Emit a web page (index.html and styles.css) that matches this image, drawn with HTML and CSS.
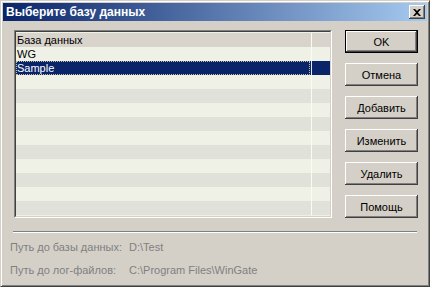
FILE: index.html
```html
<!DOCTYPE html>
<html lang="ru">
<head>
  <meta charset="UTF-8" />
  <title>Выберите базу данных</title>
  <link rel="stylesheet" href="styles.css">
</head>
<body>

<div class="window">
  <!-- Title bar -->
  <div class="titlebar">
    <span class="title">Выберите базу данных</span>
    <button class="close">
      <svg width="8" height="7" viewBox="0 0 8 7"><path d="M0 0h2l2 2 2-2h2L5 3.5 8 7H6L4 5 2 7H0l3-3.5z" fill="#000"/></svg>
    </button>
  </div>

  <div class="content">
    <div class="main">
      <div class="list">
        <div class="list-inner">
          <div class="row head"><span class="col">База данных</span><span class="col2"></span></div>
          <div class="row"><span class="col">WG</span><span class="col2"></span></div>
          <div class="row selected"><span class="col"><span class="focus">Sample</span></span><span class="col2"></span></div>
          <div class="row"><span class="col"></span><span class="col2"></span></div>
          <div class="row"><span class="col"></span><span class="col2"></span></div>
          <div class="row"><span class="col"></span><span class="col2"></span></div>
          <div class="row"><span class="col"></span><span class="col2"></span></div>
          <div class="row"><span class="col"></span><span class="col2"></span></div>
          <div class="row"><span class="col"></span><span class="col2"></span></div>
          <div class="row"><span class="col"></span><span class="col2"></span></div>
          <div class="row"><span class="col"></span><span class="col2"></span></div>
          <div class="row"><span class="col"></span><span class="col2"></span></div>
          <div class="row"><span class="col"></span><span class="col2"></span></div>
        </div>
      </div>

      <div class="buttons">
        <button class="btn default">OK</button>
        <button class="btn">Отмена</button>
        <button class="btn">Добавить</button>
        <button class="btn">Изменить</button>
        <button class="btn">Удалить</button>
        <button class="btn">Помощь</button>
      </div>
    </div>

    <div class="separator"></div>

    <div class="info">
      <div class="info-row"><span class="label">Путь до базы данных:</span><span>D:\Test</span></div>
      <div class="info-row"><span class="label">Путь до лог-файлов:</span><span>C:\Program Files\WinGate</span></div>
    </div>
  </div>
</div>

</body>
</html>
```

FILE: styles.css
```css
* {
  box-sizing: border-box;
  margin: 0;
  padding: 0;
}

body {
  font-family: "Liberation Sans", Arial, sans-serif;
  font-size: 11px;
  background: #d4d0c8;
}

.window {
  width: 430px;
  height: 287px;
  background: #d4d0c8;
  border: 1px solid;
  border-color: #d4d0c8 #404040 #404040 #d4d0c8;
  box-shadow: inset 1px 1px #fff, inset -1px -1px #808080;
  padding: 2px;
  display: flex;
  flex-direction: column;
}

.titlebar {
  height: 18px;
  background: linear-gradient(to right, #0a246a, #a6caf0);
  display: flex;
  align-items: center;
  justify-content: space-between;
  padding: 0 2px 0 3px;
}

.title {
  color: #fff;
  font-weight: bold;
  font-size: 12px;
}

.close {
  width: 16px;
  height: 14px;
  background: #d4d0c8;
  border: none;
  box-shadow: inset -1px -1px #404040, inset 1px 1px #fff, inset -2px -2px #808080;
  display: flex;
  align-items: center;
  justify-content: center;
}

.content {
  flex: 1;
  padding: 9px 7px 0 7px;
}

.main {
  display: flex;
  padding-left: 4px;
}

.list {
  width: 318px;
  height: 188px;
  border: 1px solid;
  border-color: #808080 #fff #fff #808080;
}

.list-inner {
  height: 100%;
  border: 1px solid;
  border-color: #404040 #d4d0c8 #d4d0c8 #404040;
  background: #eff1e7;
  overflow: hidden;
  padding-top: 1px;
}

.row {
  display: flex;
  height: 14px;
  line-height: 14px;
}

.row:nth-child(odd) {
  background: #e0e1d9;
}

.row.head {
  background: #d8d4cc;
  color: #000;
}

.col {
  width: 295px;
  padding-left: 1px;
  color: #000;
}

.col2 {
  flex: 1;
  border-left: 1px solid #fbfbf5;
}

.row.selected {
  background: #0a246a;
}

.row.selected .col {
  color: #fff;
}

.focus {
  display: block;
  height: 14px;
  width: 294px;
  border: 1px dotted #c0c0a0;
  line-height: 12px;
  margin-left: -1px;
}

.row.selected .col2 {
  border-left-color: #e8e8e0;
}

.buttons {
  display: flex;
  flex-direction: column;
  gap: 10px;
  margin-left: 13px;
}

.btn {
  width: 73px;
  height: 23px;
  font-family: "Liberation Sans", Arial, sans-serif;
  font-size: 11px;
  color: #000;
  background: #d4d0c8;
  border: none;
  box-shadow: inset -1px -1px #404040, inset 1px 1px #fff, inset -2px -2px #808080;
}

.btn.default {
  border: 1px solid #000;
  box-shadow: inset -1px -1px #404040, inset 1px 1px #fff, inset -2px -2px #808080;
}

.separator {
  margin: 13px 3px 0 3px;
  border-top: 1px solid #808080;
  border-bottom: 1px solid #fff;
}

.info {
  padding: 3px 0 0 0;
  color: #808080;
}

.info-row {
  display: flex;
  height: 23px;
  line-height: 23px;
}

.label {
  width: 119px;
}
```
